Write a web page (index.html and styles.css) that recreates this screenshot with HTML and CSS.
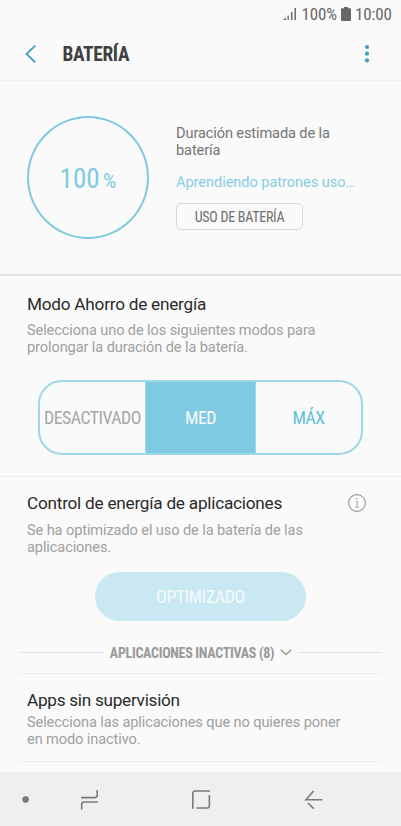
FILE: index.html
```html
<!DOCTYPE html>
<html lang="es">
<head>
<meta charset="utf-8">
<title>Batería</title>
<link rel="stylesheet" href="styles.css">
</head>
<body>
<div class="screen">
  <div class="status">
    <svg width="14" height="14" viewBox="0 0 14 14"><path d="M0 13 3 10.500V13ZM4.500 8.500h1.300V13H4.500ZM8 5h1.500v8H8ZM11.500 1H13v12h-1.500Z" fill="#6b6b6b"/></svg>
    <span class="cond status-pct">100%</span>
    <svg class="batt" width="10" height="14" viewBox="0 0 10 14"><path d="M3 0h4v1.200h2q1 0 1 1V13q0 1-1 1H1q-1 0-1-1V2.200q0-1 1-1h2Z" fill="#666"/></svg>
    <span class="cond status-time">10:00</span>
  </div>
  <header class="header">
    <svg class="back" width="12" height="20" viewBox="0 0 12 20"><path d="M10.300 1.600 1.500 10l8.800 8.400" fill="none" stroke="#429fbd" stroke-width="1.800"/></svg>
    <h1 class="cond title">BATERÍA</h1>
    <svg class="more" width="6" height="20" viewBox="0 0 6 20" fill="#429fbd"><circle cx="3" cy="3" r="2.100"/><circle cx="3" cy="9.700" r="2.100"/><circle cx="3" cy="16.400" r="2.100"/></svg>
  </header>
  <section class="summary">
    <div class="ring"><span class="cond ring-num">100</span><span class="cond ring-pct">%</span></div>
    <div class="info">
      <p class="estimate">Duración estimada de la<br>batería</p>
      <p class="learning">Aprendiendo patrones uso…</p>
      <button class="usage"><span class="cond">USO DE BATERÍA</span></button>
    </div>
  </section>
  <section class="mode">
    <h2>Modo Ahorro de energía</h2>
    <p class="desc">Selecciona uno de los siguientes modos para<br>prolongar la duración de la batería.</p>
    <div class="segments">
      <div class="seg off"><span class="cond">DESACTIVADO</span></div>
      <div class="seg med"><span class="cond">MED</span></div>
      <div class="seg max"><span class="cond">MÁX</span></div>
    </div>
  </section>
  <section class="control">
    <div class="control-head">
      <h2>Control de energía de aplicaciones</h2>
      <svg width="20" height="20" viewBox="0 0 20 20" fill="none" stroke="#999"><circle cx="10" cy="10" r="8.400" stroke-width="1.100"/><path d="M8.700 8.300h1.500v5.600M8.500 14.200h3.200" stroke-width=".9"/><path d="M9.400 5.700h1.200" stroke-width="1.200"/></svg>
    </div>
    <p class="desc">Se ha optimizado el uso de la batería de las<br>aplicaciones.</p>
    <button class="optimized"><span class="cond">OPTIMIZADO</span></button>
    <div class="inactive">
      <span class="rule"></span>
      <span class="cond inactive-label">APLICACIONES INACTIVAS (8)</span>
      <svg width="12" height="7" viewBox="0 0 12 7"><path d="M.7.8 6 5.300 11.300.8" fill="none" stroke="#a3a3a3" stroke-width="1.700"/></svg>
      <span class="rule"></span>
    </div>
  </section>
  <section class="apps">
    <h2>Apps sin supervisión</h2>
    <p class="desc">Selecciona las aplicaciones que no quieres poner<br>en modo inactivo.</p>
  </section>
  <nav class="nav">
    <svg width="401" height="54" viewBox="0 0 401 54" fill="none" stroke="#7b7b7b" stroke-width="1.600">
      <circle cx="25.600" cy="27.600" r="3.300" fill="#7b7b7b" stroke="none"/>
      <path d="M81 25.600h13.700q2.500 0 2.500-2.500V18M98 30H84q-2.300 0-2.300 2.500v5"/>
      <path d="M192.800 36.800V21.500q0-2.500 2.500-2.500h14.800M196.500 36H207q2.400 0 2.400-2.500V23"/>
      <path d="M322.300 27.700H306l7.600-8.800M308 31l5.700 5.600"/>
    </svg>
  </nav>
</div>
</body>
</html>
```
FILE: styles.css
```css
* { box-sizing: border-box; }
body, h1, h2, p { margin: 0; }
body { background: #fafafa; font-family: Roboto, sans-serif; }
button { font: inherit; padding: 0; border: 0; background: none; }
svg { display: block; flex: none; }
.cond { font-family: "Roboto Condensed", Roboto, sans-serif; font-stretch: 75%; white-space: nowrap; }
.screen { width: 401px; height: 826px; display: flex; flex-direction: column; overflow: hidden; }
.status { height: 28px; padding: 0 9px 0 283px; display: flex; align-items: center; font-size: 17px; letter-spacing: -.15px; color: #666; }
.status-pct { margin-left: 4.500px; width: 35px; }
.batt { margin-left: 4px; }
.status-time { margin-left: 4.500px; }
.header { height: 53px; padding: 0 31.500px 0 25px; display: flex; align-items: center; border-bottom: 1px solid #f0f0f0; }
.title { margin-left: 25.500px; font-size: 19.400px; letter-spacing: -.35px; font-weight: 700; color: #404040; }
.more { margin-left: auto; }
.summary { height: 195px; padding: 35px 0 0 27px; display: flex; border-bottom: 2px solid #e6e6e6; }
.ring { width: 122px; height: 123px; border: 2px solid #7ecae2; border-radius: 50%; display: flex; align-items: baseline; justify-content: center; color: #7ecae2; line-height: 122px; }
.ring-num { font-size: 27px; }
.ring-pct { font-size: 21px; margin-left: 3.500px; }
.info { margin-left: 27px; padding-top: 9px; }
.estimate, .learning { font-size: 14.600px; letter-spacing: -.12px; line-height: 17px; color: #757575; }
.learning { margin-top: 15px; letter-spacing: -.06px; color: #86cde3; }
.usage { display: flex; align-items: center; justify-content: center; margin-top: 12px; width: 127px; height: 27px; border: 1px solid #d9d9d9; border-radius: 5px; font-size: 14px; letter-spacing: -.25px; color: #6e6e6e; }
h2 { font-size: 17.200px; letter-spacing: -.24px; line-height: 20px; font-weight: 400; color: #2a2a2a; }
.desc { font-size: 14.600px; letter-spacing: -.11px; line-height: 17px; color: #a0a0a0; }
.mode { height: 201px; padding: 18px 27px 0; border-bottom: 1px solid #eee; }
.mode .desc { margin-top: 8px; }
.control .desc { margin-top: 9px; }
.segments { margin: 24px 0 0 11px; width: 325px; height: 75px; display: grid; grid-template-columns: 105px 111px 1fr; border: 2px solid #9dd8e9; border-radius: 24px; overflow: hidden; font-size: 17.800px; letter-spacing: -.5px; }
.seg { display: flex; align-items: center; justify-content: center; }
.off { color: #a6a6a6; }
.med { background: #7ecae2; color: #fafafa; border: solid #9dd8e9; border-width: 0 1px; }
.max { color: #60c0dc; }
.control { height: 196px; padding: 16px 20px 0 27px; }
.control-head { display: flex; height: 20px; justify-content: space-between; padding-right: 14px; }
.optimized { display: flex; align-items: center; justify-content: center; width: 211px; height: 49px; margin: 16px 0 0 68px; border-radius: 25px; background: #cae8f1; color: #f4fafc; font-size: 17.600px; letter-spacing: -.3px; }
.inactive { display: flex; align-items: center; height: 20px; margin: 21px 0 0 -6px; }
.inactive-label { margin: 0 6px 0 7px; font-size: 14px; letter-spacing: -.3px; font-weight: 700; color: #999; position: relative; top: 1px; }
.inactive svg { margin-right: 7px; }
.rule { flex: 1; height: 1px; background: #dcdcdc; }
.apps { margin: 0 20px; height: 89px; padding: 16px 7px 0; border-top: 1px solid #eee; border-bottom: 1px solid #eee; }
.apps h2 { letter-spacing: -.28px; }
.apps .desc { margin-top: 4px; }
.nav { margin-top: auto; height: 54px; background: #efefef; }
```
